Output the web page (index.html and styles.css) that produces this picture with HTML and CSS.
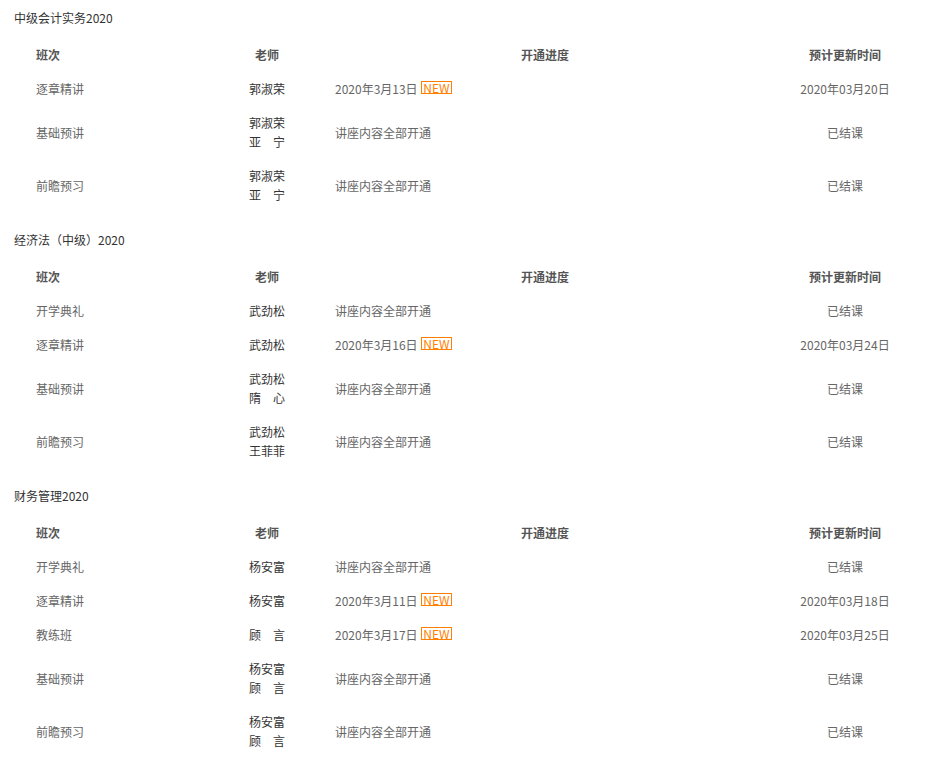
FILE: index.html
```html
<!DOCTYPE html>
<html lang="zh-CN">
<head>
<meta charset="utf-8">
<title>课程更新</title>
<link rel="stylesheet" href="styles.css">
</head>
<body>
<div class="page">
  <section class="course">
    <h2 class="course-title">中级会计实务2020</h2>
    <table class="schedule">
      <colgroup><col class="c-class"><col class="c-teacher"><col class="c-progress"><col class="c-time"></colgroup>
      <thead><tr><th class="th-class">班次</th><th>老师</th><th>开通进度</th><th>预计更新时间</th></tr></thead>
      <tbody>
        <tr><td class="name">逐章精讲</td><td class="teacher">郭淑荣</td><td class="progress">2020年3月13日 <span class="new">NEW</span></td><td class="time">2020年03月20日</td></tr>
        <tr><td class="name">基础预讲</td><td class="teacher">郭淑荣<br>亚　宁</td><td class="progress">讲座内容全部开通</td><td class="time">已结课</td></tr>
        <tr><td class="name">前瞻预习</td><td class="teacher">郭淑荣<br>亚　宁</td><td class="progress">讲座内容全部开通</td><td class="time">已结课</td></tr>
      </tbody>
    </table>
  </section>
  <section class="course">
    <h2 class="course-title">经济法（中级）2020</h2>
    <table class="schedule">
      <colgroup><col class="c-class"><col class="c-teacher"><col class="c-progress"><col class="c-time"></colgroup>
      <thead><tr><th class="th-class">班次</th><th>老师</th><th>开通进度</th><th>预计更新时间</th></tr></thead>
      <tbody>
        <tr><td class="name">开学典礼</td><td class="teacher">武劲松</td><td class="progress">讲座内容全部开通</td><td class="time">已结课</td></tr>
        <tr><td class="name">逐章精讲</td><td class="teacher">武劲松</td><td class="progress">2020年3月16日 <span class="new">NEW</span></td><td class="time">2020年03月24日</td></tr>
        <tr><td class="name">基础预讲</td><td class="teacher">武劲松<br>隋　心</td><td class="progress">讲座内容全部开通</td><td class="time">已结课</td></tr>
        <tr><td class="name">前瞻预习</td><td class="teacher">武劲松<br>王菲菲</td><td class="progress">讲座内容全部开通</td><td class="time">已结课</td></tr>
      </tbody>
    </table>
  </section>
  <section class="course">
    <h2 class="course-title">财务管理2020</h2>
    <table class="schedule">
      <colgroup><col class="c-class"><col class="c-teacher"><col class="c-progress"><col class="c-time"></colgroup>
      <thead><tr><th class="th-class">班次</th><th>老师</th><th>开通进度</th><th>预计更新时间</th></tr></thead>
      <tbody>
        <tr><td class="name">开学典礼</td><td class="teacher">杨安富</td><td class="progress">讲座内容全部开通</td><td class="time">已结课</td></tr>
        <tr><td class="name">逐章精讲</td><td class="teacher">杨安富</td><td class="progress">2020年3月11日 <span class="new">NEW</span></td><td class="time">2020年03月18日</td></tr>
        <tr><td class="name">教练班</td><td class="teacher">顾　言</td><td class="progress">2020年3月17日 <span class="new">NEW</span></td><td class="time">2020年03月25日</td></tr>
        <tr><td class="name">基础预讲</td><td class="teacher">杨安富<br>顾　言</td><td class="progress">讲座内容全部开通</td><td class="time">已结课</td></tr>
        <tr><td class="name">前瞻预习</td><td class="teacher">杨安富<br>顾　言</td><td class="progress">讲座内容全部开通</td><td class="time">已结课</td></tr>
      </tbody>
    </table>
  </section>
</div>
</body>
</html>
```
FILE: styles.css
```css
html, body {
  margin: 0;
  padding: 0;
  background: #fff;
}
body {
  font-family: "Noto Sans CJK SC", "Noto Sans", sans-serif;
  font-size: 12px;
  color: #666;
}
.page {
  padding-left: 14px;
}
.course {
  margin-bottom: 11px;
}
.course-title {
  margin: 0;
  padding: 8px 0 10px;
  font-size: 12px;
  line-height: 19px;
  font-weight: normal;
  color: #333;
}
.schedule {
  border-collapse: collapse;
  table-layout: fixed;
  width: 894px;
}
.c-class { width: 212px; }
.c-teacher { width: 82px; }
.c-progress { width: 474px; }
.c-time { width: 126px; }
.schedule th,
.schedule td {
  padding: 8px 0 7px;
  line-height: 19px;
  vertical-align: middle;
  white-space: nowrap;
}
.schedule th {
  font-weight: bold;
  color: #555;
  text-align: center;
}
.schedule th.th-class {
  text-align: left;
  padding-left: 22px;
}
.name {
  padding-left: 22px !important;
  text-align: left;
}
.teacher {
  text-align: center;
  color: #333;
}
.progress {
  text-align: left;
  padding-left: 27px !important;
}
.time {
  text-align: center;
}
.new {
  display: inline-block;
  border: 1px solid #ff7f00;
  color: #ff7f00;
  line-height: 11px;
  padding: 0 1px;
  font-size: 12px;
  vertical-align: 1px;
  margin-left: 1px;
}
```
